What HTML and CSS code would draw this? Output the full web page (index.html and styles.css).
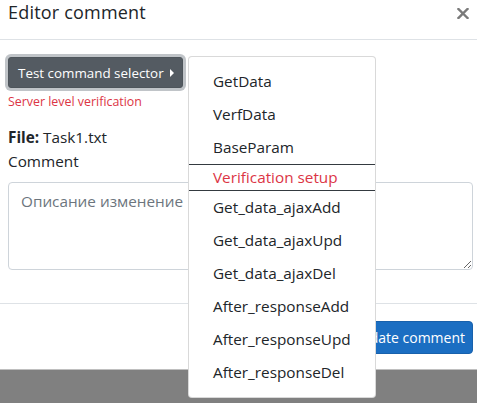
FILE: index.html
```html
<!DOCTYPE html>
<html lang="en">
<head>
<meta charset="utf-8">
<title>Editor comment</title>
<link rel="stylesheet" href="styles.css">
</head>
<body>
<div class="modal">
  <div class="modal-header">
    <h5 class="modal-title">Editor comment</h5>
    <button class="close" type="button" aria-label="Close">
      <svg width="12" height="11" viewBox="0 0 12 11" aria-hidden="true"><path d="M1.5 1 L10.5 10 M10.5 1 L1.5 10" stroke="#7a7a7a" stroke-width="2.4" stroke-linecap="square"/></svg>
    </button>
  </div>
  <div class="modal-body">
    <div class="btn-group">
      <button class="btn-selector" type="button">Test command selector<span class="caret"></span></button>
      <div class="dropdown-menu">
        <a class="dropdown-item">GetData</a>
        <a class="dropdown-item">VerfData</a>
        <a class="dropdown-item">BaseParam</a>
        <a class="dropdown-item item-danger">Verification setup</a>
        <a class="dropdown-item">Get_data_ajaxAdd</a>
        <a class="dropdown-item">Get_data_ajaxUpd</a>
        <a class="dropdown-item">Get_data_ajaxDel</a>
        <a class="dropdown-item">After_responseAdd</a>
        <a class="dropdown-item">After_responseUpd</a>
        <a class="dropdown-item">After_responseDel</a>
      </div>
    </div>
    <div class="feedback">Server level verification</div>
    <div class="file-line"><b>File:</b> Task1.txt</div>
    <label class="label">Comment</label>
    <textarea class="form-control" rows="3" placeholder="Описание изменение"></textarea>
  </div>
  <div class="modal-footer">
    <button class="btn-primary" type="button">Update comment</button>
  </div>
</div>
</body>
</html>
```
FILE: styles.css
```css
* { box-sizing: border-box; }
html, body { margin: 0; padding: 0; }
body {
  background: #808080;
  font-family: "Open Sans", "Noto Sans", sans-serif;
  color: #212529;
  width: 477px;
  height: 403px;
  overflow: hidden;
}
.modal {
  background: #fff;
  border-bottom: 1px solid rgba(0,0,0,.25);
}
.modal-header {
  display: flex;
  justify-content: space-between;
  align-items: flex-start;
  height: 40px;
  padding: 0 7px 0 8px;
  border-bottom: 1px solid #dee2e6;
}
.modal-title {
  margin: 0;
  font-size: 18px;
  font-weight: 500;
  letter-spacing: 0.2px;
  line-height: normal;
}
.close {
  border: 0;
  background: transparent;
  padding: 0;
  margin-top: 7px;
  width: 14px;
  height: 12px;
  display: flex;
  align-items: center;
  justify-content: center;
}
.modal-body {
  padding: 17px 4px 33px 8px;
  display: flex;
  flex-direction: column;
  align-items: flex-start;
}
.btn-group {
  position: relative;
  display: flex;
}
.btn-selector {
  display: flex;
  align-items: center;
  height: 31px;
  width: 175px;
  padding: 0 8px 0 9px;
  font-family: inherit;
  font-size: 13.4px;
  line-height: 20px;
  color: #fff;
  background: #545b62;
  border: 1px solid #4e555b;
  border-radius: 3px;
  box-shadow: 0 0 0 3px rgba(130,138,145,.5);
}
.caret {
  display: inline-block;
  width: 0;
  height: 0;
  margin-left: 6px;
  border-top: 4px solid transparent;
  border-bottom: 4px solid transparent;
  border-left: 4px solid #fff;
}
.dropdown-menu {
  position: absolute;
  left: 180px;
  top: -1px;
  width: 188px;
  padding: 8px 0;
  background: #fff;
  border: 1px solid rgba(0,0,0,.15);
  border-radius: 4px;
  display: flex;
  flex-direction: column;
  z-index: 10;
}
.dropdown-item {
  display: block;
  padding: 4px 24px;
  font-size: 15.3px;
  line-height: 25px;
  color: #212529;
  white-space: nowrap;
}
.item-danger {
  padding: 0 24px;
  color: #dc3545;
  border-top: 1px solid #343a40;
  border-bottom: 1px solid #343a40;
}
.feedback {
  margin-top: 4px;
  font-size: 12.4px;
  line-height: 19px;
  color: #dc3545;
}
.file-line {
  margin-top: 14px;
  font-size: 15.3px;
  line-height: 24px;
}
.file-line b { font-weight: 700; }
.label {
  font-size: 15.3px;
  line-height: 24px;
  margin-bottom: 9px;
}
.form-control {
  display: block;
  width: 465px;
  height: 88px;
  padding: 6px 12px;
  font-family: inherit;
  font-size: 15.3px;
  line-height: 24px;
  color: #495057;
  border: 1px solid #ced4da;
  border-radius: 4px;
  background: #fff;
}
.form-control::placeholder { color: #6c757d; opacity: 1; }
.modal-footer {
  display: flex;
  justify-content: flex-end;
  padding: 17px 4px 15px 8px;
  border-top: 1px solid #dee2e6;
}
.btn-primary {
  height: 33px;
  padding: 0 7px 0 10px;
  font-family: inherit;
  font-size: 14px;
  line-height: 20px;
  color: #fff;
  background: #1b6ec2;
  border: 1px solid #1861ac;
  border-radius: 4px;
}
```
